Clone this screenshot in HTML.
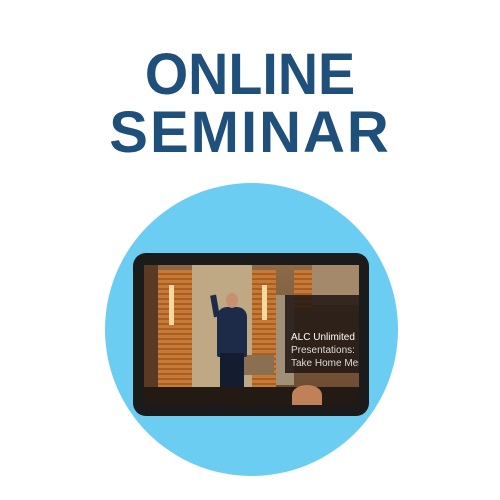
<!DOCTYPE html>
<html><head><style>
body{margin:0;width:500px;height:500px;background:#fff;position:relative;overflow:hidden;font-family:"Liberation Sans",sans-serif}
.t{position:absolute;left:0;width:500px;text-align:center;color:#1f4f7b;font-weight:bold;white-space:nowrap}
.a{position:absolute}
</style></head><body>
<div class="t" style="top:44px;font-size:58px;line-height:62px;letter-spacing:0px;transform:scaleX(0.96)">ONLINE</div>
<div class="t" style="top:102px;font-size:58px;line-height:62px;letter-spacing:2px;transform:scaleX(1.0)">SEMINAR</div>
<div class="a" style="left:105px;top:183px;width:293px;height:293px;border-radius:50%;background:#6bcdf1"></div>
<div class="a" style="left:133px;top:253px;width:236px;height:163px;border-radius:13px;background:#1b1b1c"></div>
<div class="a" style="left:144px;top:265px;width:215px;height:140px;overflow:hidden;background:#8a6a48">
 <div class="a" style="left:0;top:0;width:215px;height:140px;background:linear-gradient(#8c6a48,#6a4a30)"></div>
 <div class="a" style="left:0;top:0;width:14px;height:140px;background:#5a3a22"></div>
 <div class="a" style="left:14px;top:5px;width:34px;height:125px;background:repeating-linear-gradient(#c67a35 0 3px,#a85f25 3px 5px)"></div>
 <div class="a" style="left:48px;top:0;width:60px;height:130px;background:#bfa985"></div>
 <div class="a" style="left:108px;top:5px;width:24px;height:120px;background:repeating-linear-gradient(#c67a35 0 3px,#a85f25 3px 5px)"></div>
 <div class="a" style="left:132px;top:30px;width:18px;height:90px;background:#a09078"></div>
 <div class="a" style="left:150px;top:5px;width:18px;height:40px;background:repeating-linear-gradient(#c67a35 0 3px,#a85f25 3px 5px)"></div>
 <div class="a" style="left:168px;top:0;width:47px;height:40px;background:#a48a6a"></div>
 <div class="a" style="left:25px;top:20px;width:5px;height:40px;background:#f5d9a0"></div>
 <div class="a" style="left:118px;top:20px;width:5px;height:35px;background:#f5d9a0"></div>
 <div class="a" style="left:80px;top:90px;width:50px;height:20px;background:#8a7050"></div>
 <div class="a" style="left:73px;top:42px;width:30px;height:50px;border-radius:10px 10px 2px 2px;background:#1d2a48"></div>
 <div class="a" style="left:82px;top:28px;width:12px;height:15px;border-radius:50%;background:#c89070"></div>
 <div class="a" style="left:68px;top:30px;width:6px;height:22px;background:#1d2a48;transform:rotate(-10deg)"></div>
 <div class="a" style="left:76px;top:88px;width:24px;height:45px;background:#141c30"></div>
 <div class="a" style="left:0;top:122px;width:215px;height:18px;background:#241a14"></div>
 <div class="a" style="left:148px;top:120px;width:30px;height:20px;border-radius:50% 50% 0 0;background:#c0805a"></div>
 <div class="a" style="left:141px;top:30px;width:74px;height:78px;background:rgba(35,25,20,0.88)"></div>
 <div class="a" style="left:147px;top:66px;color:#fff;font-size:10px;line-height:13px;white-space:nowrap">ALC Unlimited<br><span style="color:#ddd">Presentations:<br>Take Home Messa</span></div>
</div>
</body></html>
